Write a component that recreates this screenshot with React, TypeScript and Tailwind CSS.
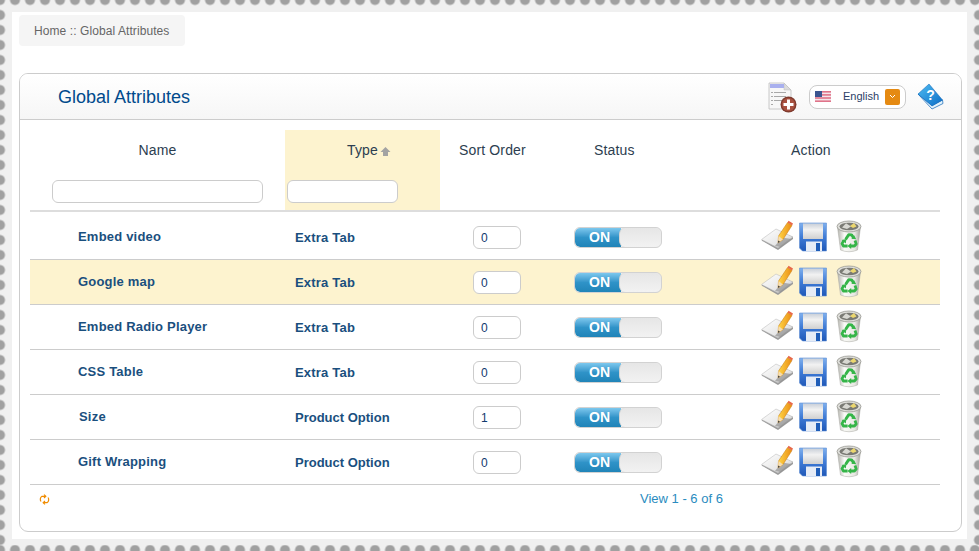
import React from "react";

const rows = [
  { name: "Embed video", type: "Extra Tab", order: "0" },
  { name: "Google map", type: "Extra Tab", order: "0", hi: true },
  { name: "Embed Radio Player", type: "Extra Tab", order: "0" },
  { name: "CSS Table", type: "Extra Tab", order: "0" },
  { name: "Size", type: "Product Option", order: "1" },
  { name: "Gift Wrapping", type: "Product Option", order: "0" },
];

const cols = "grid grid-cols-[255px_155px_105px_138px_257px]";

function PencilIcon() {
  return (
    <svg width="33" height="33" viewBox="0 0 33 33" className="shrink-0">
      <defs>
        <linearGradient id="pa" x1="0" y1="0" x2="1" y2="1">
          <stop offset="0" stopColor="#ffffff" />
          <stop offset=".6" stopColor="#e8e8e8" />
          <stop offset="1" stopColor="#b4b4b4" />
        </linearGradient>
        <linearGradient id="pe" x1="0" y1="0" x2="1" y2="0">
          <stop offset="0" stopColor="#ffd84a" />
          <stop offset="1" stopColor="#ea8c12" />
        </linearGradient>
      </defs>
      <path d="M0.5 20.5 L15 10 L32 17 L32 19 L17 30 Z" fill="#9a9a9a" />
      <path d="M0.5 19.5 L15 9 L32 17 L17 28 Z" fill="url(#pa)" stroke="#b5b5b5" strokeWidth=".5" />
      <path d="M21 17.5 L30 19 L20 27 L14 26 Z" fill="#8d8d8d" opacity=".65" />
      <path d="M17 23 L17.5 16 L26.5 2.5 L31 5.5 L22 19.5 Z" fill="url(#pe)" stroke="#c77a10" strokeWidth=".5" />
      <path d="M26.5 2.5 L27.5 .8 L32 3.6 L31 5.5 Z" fill="#e8694a" />
      <path d="M17 23 L17.5 16 L22 19.5 Z" fill="#f5dcb0" />
      <path d="M17 23 L17.2 20.4 L18.9 21.6 Z" fill="#333" />
    </svg>
  );
}

function FloppyIcon() {
  return (
    <svg width="30" height="30" viewBox="0 0 30 30" className="shrink-0">
      <defs>
        <linearGradient id="fb" x1="0" y1="0" x2="0" y2="1">
          <stop offset="0" stopColor="#7fb0ee" />
          <stop offset=".5" stopColor="#3f7bd6" />
          <stop offset="1" stopColor="#1f58b8" />
        </linearGradient>
        <linearGradient id="fl" x1="0" y1="0" x2="0" y2="1">
          <stop offset="0" stopColor="#c9cfd8" />
          <stop offset=".4" stopColor="#f2f2f2" />
          <stop offset="1" stopColor="#d0d0d0" />
        </linearGradient>
      </defs>
      <path d="M1.5 1 H28.5 V29 H4.5 L1.5 26 Z" fill="url(#fb)" stroke="#5f8fd4" strokeWidth=".6" />
      <rect x="5" y="1.5" width="20" height="15.5" fill="url(#fl)" />
      <rect x="8" y="19.5" width="16" height="9.5" fill="#e6ecf6" />
      <rect x="18" y="21" width="4" height="8" fill="#1f5db8" />
    </svg>
  );
}

function BinIcon() {
  return (
    <svg width="28" height="33" viewBox="0 0 28 33" className="shrink-0">
      <defs>
        <linearGradient id="bb" x1="0" y1="0" x2="1" y2="0">
          <stop offset="0" stopColor="#b2b2ac" />
          <stop offset=".3" stopColor="#fbfbf8" />
          <stop offset=".75" stopColor="#e8e8e3" />
          <stop offset="1" stopColor="#a2a29b" />
        </linearGradient>
      </defs>
      <path d="M2.5 7 L5.5 30 Q14 33.5 22.5 30 L25.5 7 Z" fill="url(#bb)" stroke="#a8a8a2" strokeWidth=".5" />
      <ellipse cx="14" cy="6.5" rx="12" ry="5.5" fill="#dededa" stroke="#8f8f88" strokeWidth=".7" />
      <ellipse cx="14" cy="6.5" rx="9.5" ry="3.8" fill="#7a7a74" />
      <path d="M7 7.5 L11 3.2 L16 6.5 L12 9 Z" fill="#d8d8d2" />
      <path d="M15 6 L19 3 L21.5 6.5 L18 8 Z" fill="#ecd76e" />
      <g fill="none" stroke="#35b548" strokeWidth="2.8" strokeLinejoin="round">
        <path d="M10.6 19.4 L13.8 14.6 L16.6 14.8 L18.6 18" />
        <path d="M20 20.5 L21.2 24 L19.4 26 L15.6 26" />
        <path d="M12.6 26 L8.4 26 L7 23.6 L8.8 20.6" />
      </g>
      <g fill="#35b548">
        <path d="M16.4 18.8 L21.2 19.2 L19 15 Z" />
        <path d="M16.2 23 L16.2 29 L12.4 26 Z" />
        <path d="M6.6 20 L11.4 19 L10.8 23.4 Z" />
      </g>
    </svg>
  );
}

function AddPageIcon() {
  return (
    <svg width="29" height="31" viewBox="0 0 29 31" className="mt-[2px] shrink-0">
      <path d="M1 1 H16 L23 8 V27 H1 Z" fill="#f7f7f7" stroke="#bdbdbd" strokeWidth=".8" />
      <path d="M16 1 V8 H23 Z" fill="#dcdcdc" stroke="#bdbdbd" strokeWidth=".5" />
      <rect x="2" y="2" width="14" height="4" fill="#a9b0ee" />
      <g fill="#a8a8a8">
        <rect x="3" y="10" width="2" height="1" />
        <rect x="6" y="10" width="12" height="1" />
        <rect x="3" y="14" width="2" height="1" />
        <rect x="6" y="14" width="12" height="1" />
        <rect x="3" y="18" width="2" height="1" />
        <rect x="6" y="18" width="8" height="1" />
        <rect x="3" y="22" width="2" height="1" />
      </g>
      <circle cx="20.5" cy="22.5" r="8" fill="#7f3b2e" />
      <circle cx="20.5" cy="22.5" r="6.6" fill="#a8503f" />
      <path d="M19 17.5 H22 V21 H25.5 V24 H22 V27.5 H19 V24 H15.5 V21 H19 Z" fill="#fff" />
    </svg>
  );
}

function Flag() {
  return (
    <svg width="16" height="11" viewBox="0 0 16 11" className="shrink-0">
      <rect width="16" height="11" fill="#f4e6ea" />
      <g fill="#e0748a">
        <rect y="0" width="16" height="1.6" />
        <rect y="3.1" width="16" height="1.6" />
        <rect y="6.2" width="16" height="1.6" />
        <rect y="9.4" width="16" height="1.6" />
      </g>
      <rect width="7" height="6" fill="#3c5590" />
    </svg>
  );
}

function BookIcon() {
  return (
    <svg width="27" height="27" viewBox="0 0 27 27" className="shrink-0">
      <defs>
        <linearGradient id="bk" x1="0" y1="0" x2="1" y2="1">
          <stop offset="0" stopColor="#4fbdf2" />
          <stop offset="1" stopColor="#0a6cc6" />
        </linearGradient>
      </defs>
      <path d="M1 11 L15 26 L26 20.5 L25.5 17 L15 22.5 Z" fill="#e3f2fb" stroke="#0c62b4" strokeWidth=".7" />
      <path d="M1 11 L12 1 L25.5 17 L15 23 Z" fill="url(#bk)" stroke="#0c62b4" strokeWidth=".5" />
      <text x="13.5" y="17" fontSize="14" fontWeight="700" fontFamily="Liberation Sans" fill="#fff" textAnchor="middle">?</text>
    </svg>
  );
}

function Refresh() {
  return (
    <svg width="11" height="11" viewBox="0 0 11 11" fill="none" stroke="#f08c00" strokeWidth="1.2" className="shrink-0">
      <path d="M2 7.5 A3.6 3.6 0 0 1 3 2.3 H6" />
      <path d="M5 .6 L6.8 2.3 L5 4" />
      <path d="M9 3.5 A3.6 3.6 0 0 1 8 8.7 H5" />
      <path d="M6 7 L4.2 8.7 L6 10.4" />
    </svg>
  );
}

function Toggle() {
  return (
    <div className="flex h-[21px] w-[88px] overflow-hidden rounded-[6px] border border-[#d2d2d2] bg-[#ececec]">
      <div className="flex w-[46px] items-center justify-center rounded-l-[5px] bg-gradient-to-b from-[#7cc8ee] via-[#2f93c8] to-[#2084b8] pl-[3px] text-[14px] leading-none font-bold text-white">
        ON
      </div>
      <div className="-ml-[2px] flex-1 rounded-[6px] border-l border-[#d5d5d5] bg-gradient-to-b from-[#e6e6e6] to-[#f2f2f2]" />
    </div>
  );
}

export default function App() {
  return (
    <div className="flex h-[551px] w-[979px] flex-col overflow-hidden bg-[#f0f0f0] font-['Liberation_Sans',Arial,sans-serif]">
      <div className="h-[6px] shrink-0 bg-[radial-gradient(circle,#a0a0a0_4.6px,transparent_5.4px)] bg-[length:15px_15px] bg-[position:7.5px_-7.5px]" />
      <div className="flex min-h-0 flex-1">
        <div className="w-[6px] shrink-0 bg-[radial-gradient(circle,#a0a0a0_4.6px,transparent_5.4px)] bg-[length:15px_15px] bg-[position:-7.5px_1.5px]" />
        <div className="min-w-0 flex-1 px-[6px] py-[6px]">
          <div className="h-full bg-white px-[7px] pt-[3px]">
            <div className="flex h-[31px] w-[166px] items-center rounded-[4px] bg-[#f5f5f5] pl-[15px] text-[12px] tracking-[.08px] text-[#666]">
              Home :: Global Attributes
            </div>
            <div className="mt-[27px] h-[459px] w-[943px] overflow-hidden rounded-[9px] border border-[#ccc] bg-white">
              <div className="flex h-[46px] items-center border-b border-[#ccc] bg-gradient-to-b from-white to-[#f6f6f6] pl-[38px] pr-[17px]">
                <h1 className="text-[18px] leading-none font-normal text-[#004a8c]">Global Attributes</h1>
                <div className="ml-auto flex items-center">
                  <AddPageIcon />
                  <div className="ml-[12px] flex h-[24px] w-[97px] items-center rounded-[8px] border border-[#ccc] bg-white pl-[5px] text-[11px] text-[#2c3e66]">
                    <Flag />
                    <span className="ml-[12px] w-[37px]">English</span>
                    <span className="ml-[5px] flex h-[16px] w-[15px] items-center justify-center rounded-[2px] bg-[#e58a12]">
                      <svg width="7" height="5" viewBox="0 0 7 5" fill="none" stroke="#fff" strokeWidth="1">
                        <path d="M1 1 L3.5 3.5 L6 1" />
                      </svg>
                    </span>
                  </div>
                  <div className="ml-[11px]">
                    <BookIcon />
                  </div>
                </div>
              </div>

              <div className="mx-[10px] mt-[10px] w-[910px]">
                <div className={`${cols} h-[82px] border-b-2 border-[#ddd] text-[14px] tracking-[.15px] text-[#2c3e50]`}>
                  <div className="flex flex-col items-center">
                    <div className="flex h-[40px] items-center">Name</div>
                    <input className="mt-[10px] h-[23px] w-[211px] rounded-[6px] border border-[#ccc] bg-white" />
                  </div>
                  <div className="flex flex-col bg-[#fdf3cf]">
                    <div className="flex h-[40px] items-center pl-[62px]">
                      Type
                      <svg width="11" height="11" viewBox="0 0 11 11" className="mt-[2px] ml-[2px]">
                        <path d="M5.5 1 L10.5 6 H8 V10 H3 V6 H.5 Z" fill="#a3a3a3" />
                      </svg>
                    </div>
                    <input className="mt-[10px] ml-[2px] h-[23px] w-[111px] rounded-[6px] border border-[#ccc] bg-white" />
                  </div>
                  <div className="flex h-[40px] items-center pl-[19px]">Sort Order</div>
                  <div className="flex h-[40px] items-center pl-[49px]">Status</div>
                  <div className="flex h-[40px] items-center pl-[108px]">Action</div>
                </div>

                {rows.map((r, i) => (
                  <div
                    key={i}
                    className={`${cols} h-[45px] items-center border-b border-[#ccc] ${i === 0 ? "mt-[3px]" : ""} ${r.hi ? "bg-[#fdf3cf]" : ""}`}
                  >
                    <div
                      className={`pb-[1px] text-[13px] font-bold tracking-[.2px] whitespace-pre text-[#1a4f7e] ${r.name === "Size" ? "pl-[49px]" : "pl-[48px]"}`}
                    >
                      {r.name}
                    </div>
                    <div
                      className={`pt-[2px] pl-[10px] text-[13px] font-bold text-[#1a4f7e] ${r.type === "Extra Tab" ? "tracking-[.2px]" : ""}`}
                    >
                      {r.type}
                    </div>
                    <div className="pl-[33px]">
                      <input
                        defaultValue={r.order}
                        className="h-[23px] w-[48px] rounded-[6px] border border-[#ccc] bg-white pl-[7px] text-[12px] text-[#123a6e]"
                      />
                    </div>
                    <div className="pl-[29px]">
                      <Toggle />
                    </div>
                    <div className="flex items-center pb-[1px] pl-[78px]">
                      <PencilIcon />
                      <div className="ml-[4px]">
                        <FloppyIcon />
                      </div>
                      <div className="ml-[7px]">
                        <BinIcon />
                      </div>
                    </div>
                  </div>
                ))}

                <div className="grid grid-cols-[610px_1fr] items-center pt-[5px]">
                  <div className="pl-[9px] pt-[1px]">
                    <Refresh />
                  </div>
                  <div className="text-[13px] leading-[18px] text-[#2a8cc0]">View 1 - 6 of 6</div>
                </div>
              </div>
            </div>
          </div>
        </div>
        <div className="w-[6px] shrink-0 bg-[radial-gradient(circle,#a0a0a0_4.6px,transparent_5.4px)] bg-[length:15px_15px] bg-[position:-1.5px_1.5px]" />
      </div>
      <div className="h-[6px] shrink-0 bg-[radial-gradient(circle,#a0a0a0_4.6px,transparent_5.4px)] bg-[length:15px_15px] bg-[position:7.5px_-2.5px]" />
    </div>
  );
}
